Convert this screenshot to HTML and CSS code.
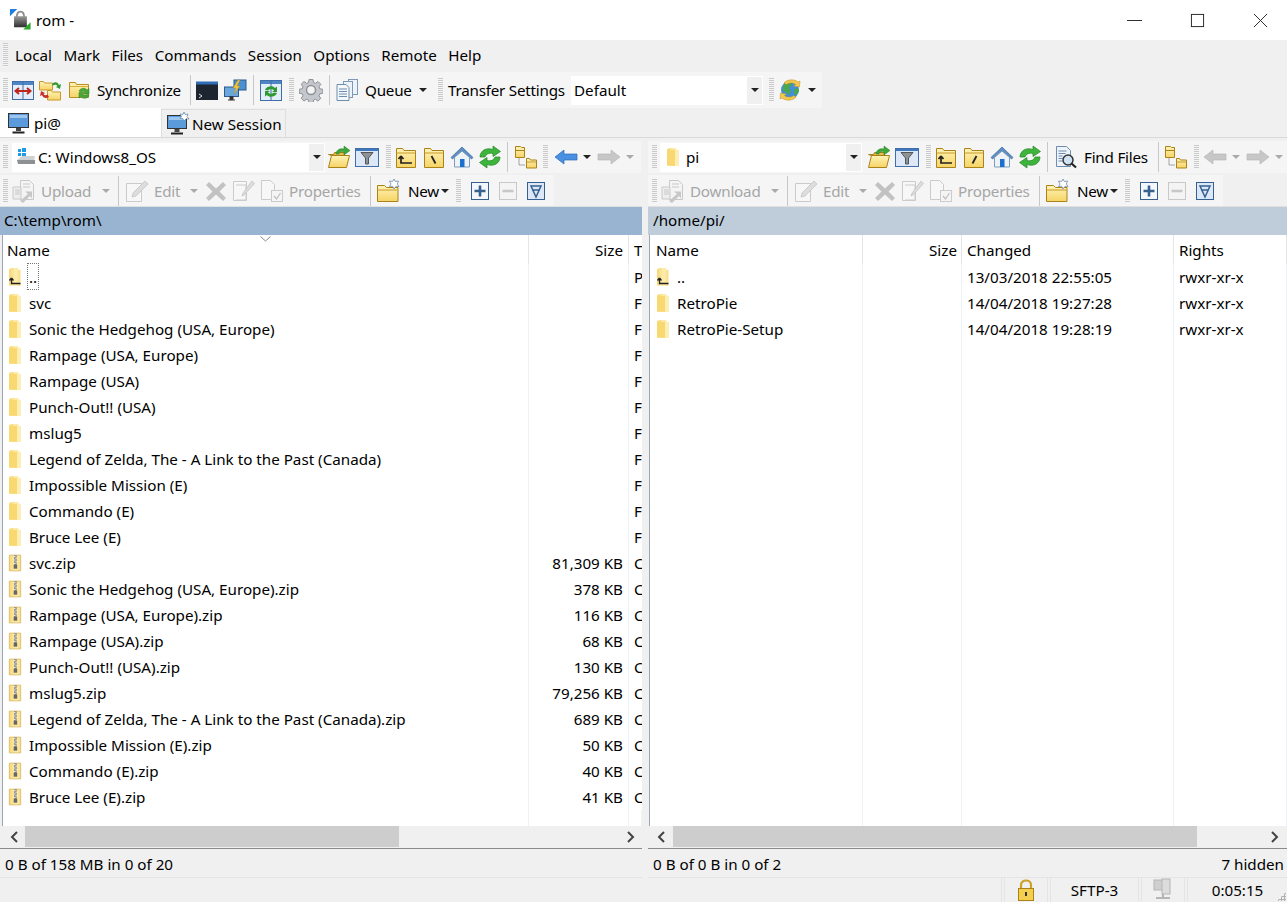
FILE: index.html
```html
<!DOCTYPE html>
<html lang="en">
<head>
<meta charset="utf-8">
<title>rom - WinSCP</title>
<link rel="stylesheet" href="styles.css">
</head>
<body>
<svg class="defs" width="0" height="0" aria-hidden="true">
<defs>
<linearGradient id="fy" x1="0" y1="0" x2="1" y2="0"><stop offset="0" stop-color="#f7d774"/><stop offset=".6" stop-color="#fdeeb0"/><stop offset="1" stop-color="#f9dc85"/></linearGradient>
<linearGradient id="fb" x1="0" y1="0" x2="0" y2="1"><stop offset="0" stop-color="#fff3b8"/><stop offset="1" stop-color="#f6d465"/></linearGradient>
<linearGradient id="lk" x1="0" y1="0" x2="0" y2="1"><stop offset="0" stop-color="#9a9a9a"/><stop offset="1" stop-color="#2e2e2e"/></linearGradient>
<symbol id="flat" viewBox="0 0 14 20"><path d="M1 2.5 3 1h7v1.5l2.5 .5v16L1 18.5z" fill="url(#fy)"/><path d="M1 2.5v16L9 19V3z" fill="#f9d872"/><path d="M9 3l3.5 0v16H9z" fill="#fdeeb4"/></symbol>
<symbol id="flatup" viewBox="0 0 14 20"><path d="M1 2.5 3 1h7v1.5l2.5 .5v16L1 18.5z" fill="url(#fy)"/><path d="M3.500 11v5.500h9M3.500 11l-2 2.500M3.500 11l2 2.500" fill="none" stroke="#222" stroke-width="1.300"/></symbol>
<symbol id="zip" viewBox="0 0 16 20"><path d="M1.500 1h13v18h-13z" fill="url(#fy)" stroke="#d9bd6a"/><path d="M7 1h3v12H7z" fill="#8d8d8d"/><path d="M7 2h1.500v1H7zm1.500 2H10v1H8.500zM7 6h1.500v1H7zm1.500 2H10v1H8.500zM7 10h1.500v1H7z" fill="#eee"/><rect x="6.500" y="12" width="4" height="4.500" fill="#666"/></symbol>
<symbol id="compare" viewBox="0 0 24 24"><rect x="1.500" y="3.500" width="21" height="18" fill="#e4eefa" stroke="#3f6ea8"/><rect x="2" y="4" width="20" height="3" fill="#4f86c6"/><path d="M12 4v17" stroke="#3f6ea8"/><path d="M5 13h14M8 10l-3.500 3L8 16M16 10l3.500 3-3.500 3" fill="none" stroke="#c0271f" stroke-width="2"/></symbol>
<symbol id="syncdirs" viewBox="0 0 24 24"><path d="M1.500 3.500h4l1 1.500h8v7h-13z" fill="url(#fb)" stroke="#c79a2a"/><path d="M9.500 12.500h4l1 1.500h8v8h-13z" fill="url(#fb)" stroke="#c79a2a"/><path d="M14 6c3-3 6-2 7 1l2-1-1 5-4-2 1.500-1c-1-1.500-3-1.500-4.500-.5z" fill="#2f9a2f"/><path d="M11 19c-3 2-6 1-7-2l-2 1 1-5 4 2-1.500 1c1 1.500 3 1.500 4 .5z" fill="#c9302a"/></symbol>
<symbol id="syncfold" viewBox="0 0 24 24"><path d="M1.500 4.500h6l1 2h12v13h-19z" fill="url(#fb)" stroke="#b98f22"/><path d="M2 8.500h18" stroke="#d9b040"/><path d="M11 13c2-3.500 6-3.500 8-1l2-1.500v5.500h-5.500l2-1.500c-1.500-1.500-3.500-1.500-4.500-.5z" fill="#45a83a" stroke="#2d7f25" stroke-width=".5"/><path d="M21 17.500c-2 3.500-6 3.500-8 1l-2 1.500v-5.500h5.500l-2 1.500c1.500 1.500 3.500 1.500 4.500.5z" fill="#45a83a" stroke="#2d7f25" stroke-width=".5"/></symbol>
<symbol id="term" viewBox="0 0 24 24"><rect x="1" y="4" width="22" height="18" fill="#1d2530"/><rect x="1" y="3.500" width="22" height="3" fill="#2f6db5"/><path d="M4 16l3 2-3 2" fill="none" stroke="#ddd"/></symbol>
<symbol id="putty" viewBox="0 0 24 24"><rect x="11" y="2" width="12" height="10" fill="#4a8fd0" stroke="#2b5a8c"/><rect x="1.500" y="9" width="14" height="9.500" fill="#6aa5dc" stroke="#2b5a8c"/><path d="M7 18.500h3v3H7zM5 22h7" stroke="#333" fill="#333"/><path d="M15 2l-5 8h3l-2 6 6-8h-3l3-6z" fill="#f3c63c" stroke="#b98f22" stroke-width=".5"/></symbol>
<symbol id="winsync" viewBox="0 0 24 24"><rect x="1.500" y="2.500" width="21" height="20" fill="#e4eefa" stroke="#3f6ea8"/><rect x="2" y="3" width="20" height="3" fill="#4f86c6"/><path d="M12 3v19" stroke="#3f6ea8"/><path d="M6 12c1-4 8-5 10-2l2-1.500V14h-5l2-1.500c-2-2-5-1-6 0z" fill="#2f9a2f"/><path d="M18 15c-1 4-8 5-10 2l-2 1.500V13h5l-2 1.500c2 2 5 1 6 0z" fill="#2f9a2f"/></symbol>
<symbol id="gear" viewBox="0 0 24 24"><path d="M10 1.500h4l.5 3 2 .8 2.500-1.800 2.800 2.800-1.800 2.500.8 2 3 .5v4l-3 .5-.8 2 1.800 2.500-2.800 2.800-2.500-1.800-2 .8-.5 3h-4l-.5-3-2-.8-2.500 1.800-2.800-2.800 1.800-2.500-.8-2-3-.5v-4l3-.5.8-2-1.800-2.500 2.800-2.800 2.500 1.800 2-.8z" fill="#c4c8cc" stroke="#8d9297"/><circle cx="12" cy="12" r="4.500" fill="#f3f3f3" stroke="#8d9297" stroke-width="1.500"/></symbol>
<symbol id="queue" viewBox="0 0 24 24"><rect x="13.500" y="1.500" width="9" height="15" fill="#eef3f9" stroke="#7d99b8"/><rect x="8.500" y="3.500" width="9" height="16" fill="#eef3f9" stroke="#7d99b8"/><path d="M2 6.500h9l3 3v13H2z" fill="#f4f7fb" stroke="#6e8cae"/><path d="M4 11h8M4 13.500h8M4 16h8M4 18.500h8" stroke="#6e8cae"/></symbol>
<symbol id="globe" viewBox="0 0 24 24"><circle cx="12" cy="12" r="9" fill="#3f8fdc"/><path d="M7 5l5-1 2 3-3 3 2 3-2 4-3-3-3-1V8zM16 11l4-1 1 3-3 5-2-3z" fill="#4aa650"/><path d="M6 5c3-4 11-4 14-1l2-1-.5 6-6-1 2-1.500c-2-2-7-2-9 0z" fill="#f2c94c" stroke="#b98f22" stroke-width=".5"/><path d="M18 19c-3 4-11 4-14 1l-2 1 .5-6 6 1-2 1.500c2 2 7 2 9 0z" fill="#f2c94c" stroke="#b98f22" stroke-width=".5"/></symbol>
<symbol id="monitor" viewBox="0 0 24 24"><rect x="1.500" y="2.500" width="20" height="14" fill="#5b9bdc" stroke="#333"/><path d="M3 4h17v3H3z" fill="#9cc6ee"/><path d="M9 17h5v3H9z" fill="#444"/><path d="M5.500 20.500h12v2h-12z" fill="#222"/></symbol>
<symbol id="monnew" viewBox="0 0 24 24"><rect x="1.500" y="3.500" width="19" height="13" fill="#5b9bdc" stroke="#333"/><path d="M3 5h14v3H3z" fill="#9cc6ee"/><path d="M8.500 17h5v3h-5z" fill="#444"/><path d="M5 20.500h12v2H5z" fill="#222"/><path d="M18 0l1.200 2.500L22 2l-1 2.500L23 7l-2.800-.2L18 9l-1.200-2.500L14 6.500 15.500 4.500 14 2l3 .5z" fill="#fff" stroke="#5f7ea5" stroke-width=".7"/></symbol>
<symbol id="disk" viewBox="0 0 20 20"><path d="M1 13l5-4h13l-1 5H1z" fill="#cfd2d4"/><path d="M1 13h18v4H2z" fill="#8d9193"/><path d="M2 2h3v3H2zM6 1h4v4H6zM2 6h3v3H2zM6 6h4v3H6z" fill="#1e9be8"/></symbol>
<symbol id="openf" viewBox="0 0 24 24"><path d="M1.500 9.500h5l1-2h10v3h-13z" fill="#e6bc4c" stroke="#a98318"/><path d="M1.500 22.500l3-12h18l-3 12z" fill="url(#fb)" stroke="#a98318"/><path d="M9 9c0-4 4-6 8-5V1l6 4.500-6 4.500V7c-3-1-5 0-5 2z" fill="#3da83a" stroke="#2a7d28" stroke-width=".5"/></symbol>
<symbol id="filter" viewBox="0 0 24 24"><rect x=".5" y="3.500" width="23" height="18" fill="#dce8f7" stroke="#3f6ea8"/><rect x="1" y="4" width="22" height="2" fill="#3f78bd"/><path d="M6 7.500h12l-4.500 5.500v6h-3v-6z" fill="#8d9297" stroke="#555"/></symbol>
<symbol id="fup" viewBox="0 0 24 24"><path d="M2.500 22.500v-19h6l1.500 2h11.500v17z" fill="url(#fb)" stroke="#a98318"/><path d="M2.500 8h19" stroke="#c79a2a"/><path d="M7 11v7h11M7 11l-2.500 3M7 11l2.500 3" fill="none" stroke="#222" stroke-width="1.700"/></symbol>
<symbol id="froot" viewBox="0 0 24 24"><path d="M2.500 22.500v-19h6l1.500 2h11.500v17z" fill="url(#fb)" stroke="#a98318"/><path d="M2.500 8h19" stroke="#c79a2a"/><path d="M9.500 11l4 7.500" stroke="#222" stroke-width="1.800"/></symbol>
<symbol id="froots" viewBox="0 0 24 24"><path d="M2.500 22.500v-19h6l1.500 2h11.500v17z" fill="url(#fb)" stroke="#a98318"/><path d="M2.500 8h19" stroke="#c79a2a"/><path d="M14.500 11l-4 7.500" stroke="#222" stroke-width="1.800"/></symbol>
<symbol id="home" viewBox="0 0 24 24"><path d="M12 2L1 12.500l1.500 1.500L12 5.500 21.500 14l1.500-1.500z" fill="#5c8fc4" stroke="#3d6a9c" stroke-width=".7"/><path d="M4.500 12.500L12 6l7.500 6.500V22h-15z" fill="#eef3f8" stroke="#7e9dbd"/><rect x="10" y="14" width="4.500" height="8" fill="#1a6fd1"/></symbol>
<symbol id="refresh" viewBox="0 0 24 24"><path d="M2 12C2 6 8 2 15 4.500V1l7.500 5.500-7.500 5V8.500C11 7.500 8 9 7 12z" fill="#3cb53a" stroke="#24852a" stroke-width=".7"/><path d="M22 12C22 18 16 22 9 19.500V23L1.500 17.500 9 12.500V15.500C13 16.500 16 15 17 12z" fill="#3cb53a" stroke="#24852a" stroke-width=".7"/></symbol>
<symbol id="tree" viewBox="0 0 24 24"><path d="M1.500 1.500h5l1 1h3v10h-9z" fill="url(#fb)" stroke="#a98318"/><path d="M1.500 5.500h9" stroke="#a98318"/><path d="M5 13.500V20h6" fill="none" stroke="#555" stroke-dasharray="1 1"/><path d="M12.500 13.500h3l1 1.500h6v8h-10z" fill="url(#fb)" stroke="#a98318"/><path d="M12.500 17h10" stroke="#c79a2a"/></symbol>
<symbol id="back" viewBox="0 0 24 24"><path d="M1 12l9-7v4h13v6H10v4z" fill="#4a90e2" stroke="#2e6cb5" stroke-width=".7"/></symbol>
<symbol id="fwd" viewBox="0 0 24 24"><path d="M23 12l-9-7v4H1v6h13v4z" fill="#4a90e2" stroke="#2e6cb5" stroke-width=".7"/></symbol>
<symbol id="upload" viewBox="0 0 24 24"><path d="M9.500 1.500h9l4 4v15h-13z" fill="#f1f3f6" stroke="#88a"/><path d="M2 8h8v12H2z" fill="#dfe4ea" stroke="#88a"/><path d="M4 11h5M4 13h5M4 15h5M12 5h7M12 8h7" stroke="#88a"/><path d="M9 22l8-7-3-2.500h7v7l-2-2.500-7 7z" fill="#7a8c7a"/></symbol>
<symbol id="edit" viewBox="0 0 24 24"><path d="M1.500 4.500h15v18h-15z" fill="#fafafa" stroke="#8d9297"/><path d="M7 18l1-4L20 2l3 3L11 17z" fill="#b6bcc2" stroke="#70767b" stroke-width=".7"/></symbol>
<symbol id="del" viewBox="0 0 24 24"><path d="M5 3l7 6.500L19 3l3 3-6.500 6.500L22 19l-3 3-7-6.500L5 22l-3-3 6.500-6.500L2 6z" fill="#7b7b7b"/></symbol>
<symbol id="editp" viewBox="0 0 24 24"><path d="M1.500 2.500h13v19h-13z" fill="#fafafa" stroke="#8d9297"/><path d="M4 6h10v15H4" fill="#fafafa" stroke="#8d9297"/><path d="M10 17l1-3L20 2l2.500 2.500L12 16z" fill="#b6bcc2" stroke="#70767b" stroke-width=".7"/></symbol>
<symbol id="props" viewBox="0 0 24 24"><path d="M1.500 1.500h9l4 4v15h-13z" fill="#fafafa" stroke="#8d9297"/><rect x="11.500" y="11.500" width="11" height="11" fill="#f5f5f5" stroke="#8d9297"/><path d="M14 17l2.500 3 4-6" fill="none" stroke="#777" stroke-width="1.300"/></symbol>
<symbol id="newf" viewBox="0 0 24 24"><path d="M1.500 6.500h7l2 2h11.500v14h-20.500z" fill="url(#fb)" stroke="#a98318"/><path d="M1.500 11h20" stroke="#c79a2a"/><path d="M18 0l1.200 2.500L22.500 2l-1.200 3 1.700 2.500-3-.2L18 10l-1.300-2.700-3.200.2L15 5l-1.500-3 3 .5z" fill="#fff" stroke="#5f7ea5" stroke-width=".7"/></symbol>
<symbol id="plus" viewBox="0 0 18 18"><rect x=".5" y=".5" width="17" height="17" fill="#f4f7fb" stroke="#35608f"/><path d="M3.500 9h11M9 3.500v11" stroke="#35608f" stroke-width="2.600"/></symbol>
<symbol id="minus" viewBox="0 0 18 18"><rect x=".5" y=".5" width="17" height="17" fill="#f4f4f4" stroke="#c8c8c8"/><path d="M3.500 9h11" stroke="#c8c8c8" stroke-width="2.600"/></symbol>
<symbol id="invert" viewBox="0 0 18 18"><rect x=".5" y=".5" width="17" height="17" fill="#dce8f7" stroke="#35608f"/><path d="M4 4h10L9 15zM5 8h8" fill="none" stroke="#35608f" stroke-width="1.500"/></symbol>
<symbol id="find" viewBox="0 0 24 24"><path d="M2.500 1.500h10l4 4v16h-14z" fill="#eef3f9" stroke="#6e8cae"/><path d="M4.500 6h8M4.500 8.500h7M4.500 11h4M4.500 13.500h4M4.500 16h4" stroke="#6e8cae"/><circle cx="14" cy="15" r="5" fill="#cfe3f5" stroke="#333" stroke-width="1.500"/><path d="M17.500 18.500l4.500 4" stroke="#222" stroke-width="2.200"/></symbol>
<symbol id="app" viewBox="0 0 24 24"><path d="M1 1h8L1 9z" fill="#1e7fe0"/><path d="M8.500 10c0-8 8-8 8 0" fill="none" stroke="#8a8a8a" stroke-width="2"/><rect x="5.500" y="9" width="14" height="12" fill="url(#lk)"/><path d="M23.500 23.500h-8l8-8z" fill="#29a829"/></symbol>
<symbol id="lock" viewBox="0 0 20 24"><path d="M5 11V7c0-6 10-6 10 0v4" fill="none" stroke="#c9a227" stroke-width="2.200"/><rect x="2.500" y="10.500" width="15" height="12" fill="#f4cf4f" stroke="#a98318"/><rect x="9" y="14" width="2" height="4" fill="#333"/></symbol>
<symbol id="net" viewBox="0 0 20 24"><rect x="1" y="2" width="11" height="10" fill="#cfcfcf" stroke="#b5b5b5"/><rect x="9" y="1" width="8" height="15" fill="#dcdcdc" stroke="#b5b5b5"/><path d="M10 16v4M3 20h14" stroke="#b5b5b5" stroke-width="2"/></symbol>
</defs>
</svg>

<div class="window">
  <header class="titlebar">
    <svg class="ico ico-app"><use href="#app"/></svg>
    <span class="title">rom -</span>
    <div class="winctl">
      <svg class="wc" viewBox="0 0 16 16"><path d="M0 8h16" stroke="#222"/></svg>
      <svg class="wc" viewBox="0 0 16 16"><rect x="1.500" y="1.500" width="13" height="13" fill="none" stroke="#222"/></svg>
      <svg class="wc" viewBox="0 0 16 16"><path d="M1 1l14 14M15 1L1 15" stroke="#222"/></svg>
    </div>
  </header>

  <nav class="menubar">
    <i class="grip"></i>
    <span>Local</span><span>Mark</span><span>Files</span><span>Commands</span><span>Session</span><span>Options</span><span>Remote</span><span>Help</span>
  </nav>

  <div class="maintools">
    <i class="grip"></i>
    <span class="ib w-c"><svg class="ico"><use href="#compare"/></svg></span>
    <span class="ib m-1"><svg class="ico"><use href="#syncdirs"/></svg></span>
    <span class="ib m-2"><svg class="ico"><use href="#syncfold"/></svg></span>
    <span class="lbl l-sync">Synchronize</span>
    <i class="sep s-9"></i>
    <span class="ib m-2"><svg class="ico"><use href="#term"/></svg></span>
    <span class="ib"><svg class="ico"><use href="#putty"/></svg></span>
    <i class="sep s-4"></i>
    <span class="ib m-3"><svg class="ico"><use href="#winsync"/></svg></span>
    <i class="grip g-4"></i>
    <span class="ib m-3"><svg class="ico"><use href="#gear"/></svg></span>
    <i class="sep s-4"></i>
    <span class="ib m-3"><svg class="ico"><use href="#queue"/></svg></span>
    <span class="lbl l-queue">Queue</span>
    <i class="caret c-queue"></i>
    <i class="grip g-b"></i>
    <span class="lbl l-ts">Transfer Settings</span>
    <div class="combo c-ts"><span>Default</span><b class="drop"><i class="caret"></i></b></div>
    <i class="grip g-c"></i>
    <span class="ib m-2"><svg class="ico"><use href="#globe"/></svg></span>
    <i class="caret c-globe"></i>
  </div>

  <div class="tabs">
    <div class="tab active"><svg class="ico"><use href="#monitor"/></svg><span>pi@</span></div>
    <div class="tab"><svg class="ico"><use href="#monnew"/></svg><span>New Session</span></div>
  </div>

  <main class="panes">
    <section class="pane pane-l">
      <div class="tb tb1">
        <i class="grip"></i>
        <div class="combo c-local"><svg class="ico-d"><use href="#disk"/></svg><span>C: Windows8_OS</span><b class="drop"><i class="caret"></i></b></div>
        <span class="ib"><svg class="ico"><use href="#openf"/></svg></span>
        <span class="ib"><svg class="ico"><use href="#filter"/></svg></span>
        <i class="grip g-5"></i>
        <span class="ib m-1"><svg class="ico"><use href="#fup"/></svg></span>
        <span class="ib"><svg class="ico"><use href="#froot"/></svg></span>
        <span class="ib"><svg class="ico"><use href="#home"/></svg></span>
        <span class="ib"><svg class="ico"><use href="#refresh"/></svg></span>
        <i class="sep s-3"></i>
        <span class="ib m-4"><svg class="ico"><use href="#tree"/></svg></span>
        <i class="grip g-3"></i>
        <span class="ib m-4"><svg class="ico"><use href="#back"/></svg></span>
        <i class="caret cbox"></i>
        <span class="ib off m-1"><svg class="ico"><use href="#fwd"/></svg></span>
        <i class="caret cbox dis"></i>
      </div>
      <div class="tb tb2">
        <i class="grip"></i>
        <span class="ib off m-1"><svg class="ico"><use href="#upload"/></svg></span>
        <span class="lbl dis t-upload">Upload</span>
        <i class="caret cbox dis"></i>
        <i class="sep s-5"></i>
        <span class="ib off m-4"><svg class="ico"><use href="#edit"/></svg></span>
        <span class="lbl dis t-edit">Edit</span>
        <i class="caret cbox dis"></i>
        <span class="ib off m-1"><svg class="ico"><use href="#del"/></svg></span>
        <span class="ib off"><svg class="ico"><use href="#editp"/></svg></span>
        <span class="ib off"><svg class="ico"><use href="#props"/></svg></span>
        <span class="lbl dis t-props">Properties</span>
        <i class="sep s-9"></i>
        <span class="ib m-3"><svg class="ico"><use href="#newf"/></svg></span>
        <span class="lbl t-new">New</span>
        <i class="caret c-new"></i>
        <i class="grip g-7"></i>
        <span class="ib m-5"><svg class="ico-s"><use href="#plus"/></svg></span>
        <span class="ib"><svg class="ico-s"><use href="#minus"/></svg></span>
        <span class="ib"><svg class="ico-s"><use href="#invert"/></svg></span>
      </div>
      <div class="path active-path">C:\temp\rom\</div>
      <div class="list">
        <div class="row head cols-l"><span class="c n">Name<svg class="sort" viewBox="0 0 11 6"><path d="M.5 .5 5.500 5 10.500 .5" fill="none" stroke="#888"/></svg></span><span class="c r">Size</span><span class="c t">T</span></div>
        <div class="row cols-l"><span class="c n"><svg class="fi"><use href="#flatup"/></svg><span class="focus">..</span></span><span class="c r"></span><span class="c t">P</span></div>
        <div class="row cols-l"><span class="c n"><svg class="fi"><use href="#flat"/></svg>svc</span><span class="c r"></span><span class="c t">F</span></div>
        <div class="row cols-l"><span class="c n"><svg class="fi"><use href="#flat"/></svg>Sonic the Hedgehog (USA, Europe)</span><span class="c r"></span><span class="c t">F</span></div>
        <div class="row cols-l"><span class="c n"><svg class="fi"><use href="#flat"/></svg>Rampage (USA, Europe)</span><span class="c r"></span><span class="c t">F</span></div>
        <div class="row cols-l"><span class="c n"><svg class="fi"><use href="#flat"/></svg>Rampage (USA)</span><span class="c r"></span><span class="c t">F</span></div>
        <div class="row cols-l"><span class="c n"><svg class="fi"><use href="#flat"/></svg>Punch-Out!! (USA)</span><span class="c r"></span><span class="c t">F</span></div>
        <div class="row cols-l"><span class="c n"><svg class="fi"><use href="#flat"/></svg>mslug5</span><span class="c r"></span><span class="c t">F</span></div>
        <div class="row cols-l"><span class="c n"><svg class="fi"><use href="#flat"/></svg>Legend of Zelda, The - A Link to the Past (Canada)</span><span class="c r"></span><span class="c t">F</span></div>
        <div class="row cols-l"><span class="c n"><svg class="fi"><use href="#flat"/></svg>Impossible Mission (E)</span><span class="c r"></span><span class="c t">F</span></div>
        <div class="row cols-l"><span class="c n"><svg class="fi"><use href="#flat"/></svg>Commando (E)</span><span class="c r"></span><span class="c t">F</span></div>
        <div class="row cols-l"><span class="c n"><svg class="fi"><use href="#flat"/></svg>Bruce Lee (E)</span><span class="c r"></span><span class="c t">F</span></div>
        <div class="row cols-l"><span class="c n"><svg class="fi"><use href="#zip"/></svg>svc.zip</span><span class="c r">81,309 KB</span><span class="c t">C</span></div>
        <div class="row cols-l"><span class="c n"><svg class="fi"><use href="#zip"/></svg>Sonic the Hedgehog (USA, Europe).zip</span><span class="c r">378 KB</span><span class="c t">C</span></div>
        <div class="row cols-l"><span class="c n"><svg class="fi"><use href="#zip"/></svg>Rampage (USA, Europe).zip</span><span class="c r">116 KB</span><span class="c t">C</span></div>
        <div class="row cols-l"><span class="c n"><svg class="fi"><use href="#zip"/></svg>Rampage (USA).zip</span><span class="c r">68 KB</span><span class="c t">C</span></div>
        <div class="row cols-l"><span class="c n"><svg class="fi"><use href="#zip"/></svg>Punch-Out!! (USA).zip</span><span class="c r">130 KB</span><span class="c t">C</span></div>
        <div class="row cols-l"><span class="c n"><svg class="fi"><use href="#zip"/></svg>mslug5.zip</span><span class="c r">79,256 KB</span><span class="c t">C</span></div>
        <div class="row cols-l"><span class="c n"><svg class="fi"><use href="#zip"/></svg>Legend of Zelda, The - A Link to the Past (Canada).zip</span><span class="c r">689 KB</span><span class="c t">C</span></div>
        <div class="row cols-l"><span class="c n"><svg class="fi"><use href="#zip"/></svg>Impossible Mission (E).zip</span><span class="c r">50 KB</span><span class="c t">C</span></div>
        <div class="row cols-l"><span class="c n"><svg class="fi"><use href="#zip"/></svg>Commando (E).zip</span><span class="c r">40 KB</span><span class="c t">C</span></div>
        <div class="row cols-l"><span class="c n"><svg class="fi"><use href="#zip"/></svg>Bruce Lee (E).zip</span><span class="c r">41 KB</span><span class="c t">C</span></div>
        <div class="row fill cols-l"><span class="c"></span><span class="c"></span><span class="c"></span></div>
      </div>
      <div class="hscroll">
        <span class="sb"><svg viewBox="0 0 10 14"><path d="M8 2 3 7l5 5" fill="none" stroke="#444" stroke-width="2"/></svg></span>
        <span class="track"><b class="thumb thumb-l"></b></span>
        <span class="sb"><svg viewBox="0 0 10 14"><path d="M2 2l5 5-5 5" fill="none" stroke="#444" stroke-width="2"/></svg></span>
      </div>
      <div class="pstatus">0 B of 158 MB in 0 of 20</div>
    </section>

    <section class="pane pane-r">
      <div class="tb tb1 tbr">
        <i class="grip"></i>
        <div class="combo c-remote"><svg class="fi"><use href="#flat"/></svg><span>pi</span><b class="drop"><i class="caret"></i></b></div>
        <span class="ib m-3"><svg class="ico"><use href="#openf"/></svg></span>
        <span class="ib"><svg class="ico"><use href="#filter"/></svg></span>
        <i class="grip g-5"></i>
        <span class="ib m-1"><svg class="ico"><use href="#fup"/></svg></span>
        <span class="ib"><svg class="ico"><use href="#froots"/></svg></span>
        <span class="ib"><svg class="ico"><use href="#home"/></svg></span>
        <span class="ib"><svg class="ico"><use href="#refresh"/></svg></span>
        <i class="sep s-3"></i>
        <span class="ib m-4"><svg class="ico"><use href="#find"/></svg></span>
        <span class="lbl t-find">Find Files</span>
        <i class="sep s-9"></i>
        <span class="ib m-3"><svg class="ico"><use href="#tree"/></svg></span>
        <i class="grip g-4"></i>
        <span class="ib off m-2"><svg class="ico"><use href="#back"/></svg></span>
        <i class="caret cbox dis"></i>
        <span class="ib off m-1"><svg class="ico"><use href="#fwd"/></svg></span>
        <i class="caret cbox dis"></i>
      </div>
      <div class="tb tb2 tbr">
        <i class="grip"></i>
        <span class="ib off m-1"><svg class="ico"><use href="#upload"/></svg></span>
        <span class="lbl dis t-dl">Download</span>
        <i class="caret cbox dis"></i>
        <i class="sep s-5"></i>
        <span class="ib off m-4"><svg class="ico"><use href="#edit"/></svg></span>
        <span class="lbl dis t-edit">Edit</span>
        <i class="caret cbox dis"></i>
        <span class="ib off m-1"><svg class="ico"><use href="#del"/></svg></span>
        <span class="ib off"><svg class="ico"><use href="#editp"/></svg></span>
        <span class="ib off"><svg class="ico"><use href="#props"/></svg></span>
        <span class="lbl dis t-props">Properties</span>
        <i class="sep s-9"></i>
        <span class="ib m-3"><svg class="ico"><use href="#newf"/></svg></span>
        <span class="lbl t-new">New</span>
        <i class="caret c-new"></i>
        <i class="grip g-7"></i>
        <span class="ib m-5"><svg class="ico-s"><use href="#plus"/></svg></span>
        <span class="ib"><svg class="ico-s"><use href="#minus"/></svg></span>
        <span class="ib"><svg class="ico-s"><use href="#invert"/></svg></span>
      </div>
      <div class="path idle-path">/home/pi/</div>
      <div class="list">
        <div class="row head cols-r"><span class="c n">Name</span><span class="c r">Size</span><span class="c d">Changed</span><span class="c d">Rights</span></div>
        <div class="row cols-r"><span class="c n"><svg class="fi"><use href="#flatup"/></svg>..</span><span class="c r"></span><span class="c d">13/03/2018 22:55:05</span><span class="c d">rwxr-xr-x</span></div>
        <div class="row cols-r"><span class="c n"><svg class="fi"><use href="#flat"/></svg>RetroPie</span><span class="c r"></span><span class="c d">14/04/2018 19:27:28</span><span class="c d">rwxr-xr-x</span></div>
        <div class="row cols-r"><span class="c n"><svg class="fi"><use href="#flat"/></svg>RetroPie-Setup</span><span class="c r"></span><span class="c d">14/04/2018 19:28:19</span><span class="c d">rwxr-xr-x</span></div>
        <div class="row fill cols-r"><span class="c"></span><span class="c"></span><span class="c"></span><span class="c"></span></div>
      </div>
      <div class="hscroll">
        <span class="sb"><svg viewBox="0 0 10 14"><path d="M8 2 3 7l5 5" fill="none" stroke="#444" stroke-width="2"/></svg></span>
        <span class="track"><b class="thumb thumb-r"></b></span>
        <span class="sb"><svg viewBox="0 0 10 14"><path d="M2 2l5 5-5 5" fill="none" stroke="#444" stroke-width="2"/></svg></span>
      </div>
      <div class="pstatus"><span>0 B of 0 B in 0 of 2</span><span>7 hidden</span></div>
    </section>
  </main>

  <footer class="statusbar">
    <div class="cell grow"></div>
    <div class="cell c-lock"><svg class="st-i"><use href="#lock"/></svg></div>
    <div class="cell c-proto">SFTP-3</div>
    <div class="cell c-net"><svg class="st-i"><use href="#net"/></svg></div>
    <div class="cell c-time">0:05:15</div>
    <i class="sizegrip"></i>
  </footer>
</div>
</body>
</html>
```
FILE: styles.css
```css
* { box-sizing: border-box; }
html, body { margin: 0; height: 100%; }
body { font: 15.2px/20px "Noto Sans", "Open Sans", sans-serif; color: #000; background: #f0f0f0; overflow: hidden; }
.defs { position: absolute; }
i, b { display: block; font-style: normal; flex: none; }
svg { display: block; flex: none; }
.window { display: flex; flex-direction: column; height: 902px; }

.titlebar { height: 40px; background: #fff; display: flex; align-items: center; padding-left: 9px; flex: none; }
.ico { width: 24px; height: 24px; }
.ico-app { width: 22px; height: 22px; margin-top: -3px; }
.title { margin-left: 5px; }
.winctl { margin-left: auto; display: flex; gap: 48px; padding-right: 19px; }
.wc { width: 15px; height: 15px; }

.grip { width: 5px; height: 24px; background: repeating-linear-gradient(#c9c9c9 0 1px, #f5f5f5 1px 2px); }

.menubar { height: 32px; display: flex; align-items: center; padding: 0 0 2px 3px; flex: none; }
.menubar span { margin-left: 11.500px; }
.menubar span:first-of-type { margin-left: 7px; }

.maintools { height: 36px; width: fit-content; display: flex; align-items: center; padding: 0 6px 0 3px; flex: none; background: #f5f5f5; }
.ib { width: 28px; height: 28px; display: flex; align-items: center; justify-content: center; flex: none; }
.sep { width: 1px; height: 30px; background: #c8c8c8; flex: none; }
.caret { width: 0; height: 0; border: 4px solid transparent; border-top-color: #222; border-bottom: 0; }
.caret.dis { border-top-color: #aaa; }
.cbox { margin: 0 3px; }
.w-c { margin-left: 3px; width: 24px; }
.lbl { white-space: nowrap; flex: none; letter-spacing: -.22px; }
.dis { color: #a6a6a6; }
.off svg { filter: grayscale(1) opacity(.42); }
.l-sync { width: 84px; margin-left: 3px; }
.l-queue { margin-left: 4px; width: 46px; }
.c-queue { margin-left: 8px; }
.g-b { margin-left: 11px; }
.l-ts { margin-left: 5px; width: 116px; }
.combo { height: 29px; background: #fff; display: flex; align-items: center; flex: none; }
.c-ts { width: 192px; margin-left: 7px; padding-left: 3px; }
.drop { margin-left: auto; width: 17px; height: 100%; background: #f0f0f0; border: 1px solid #fff; display: flex; align-items: center; justify-content: center; }
.g-c { margin-left: 6px; }
.c-globe { margin-left: 4px; }

.tabs { height: 30px; display: flex; align-items: stretch; border-bottom: 1px solid #d9d9d9; flex: none; }
.tab { display: flex; align-items: center; padding-left: 4px; gap: 2px; border: 1px solid #dedede; border-bottom: 0; margin-top: 1px; width: 125px; }
.tab.active { background: #fff; width: 161px; border: 0; margin-top: 0; padding-left: 7px; gap: 3px; }

.panes { flex: 1; display: flex; min-height: 0; }
.pane { display: flex; flex-direction: column; min-width: 0; padding-top: 3px; }
.pane-l { width: 642px; flex: none; }
.pane-r { flex: 1; margin-left: 6px; }

.tb { height: 32px; width: fit-content; display: flex; align-items: center; padding: 0 4px 0 3px; flex: none; background: #f5f5f5; }
.tb2 { margin-top: 2px; height: 31px; }
.tbr { padding-left: 4px; }
.c-local { width: 313px; margin-left: 4px; padding-left: 4px; gap: 2px; }
.ico-d { width: 20px; height: 20px; }
.c-remote { width: 202px; margin-left: 3px; padding-left: 6px; }
.c-remote .fi { margin-right: 6px; }
.ico-s { width: 18px; height: 18px; }
.g-5 { margin-left: 5px; }
.m-1 { margin-left: 1px; }
.m-2 { margin-left: 2px; }
.m-3 { margin-left: 3px; }
.m-4 { margin-left: 4px; }
.m-5 { margin-left: 5px; }
.g-3 { margin-left: 3px; }
.g-4 { margin-left: 4px; }
.g-7 { margin-left: 7px; }
.s-3 { margin-left: 3px; }
.s-4 { margin-left: 4px; }
.s-5 { margin-left: 5px; }
.s-9 { margin-left: 9px; }
.t-upload { margin-left: 4px; margin-right: 6px; width: 52px; }
.t-dl { margin-left: 4px; margin-right: 6px; width: 72px; }
.t-edit { margin-left: 3px; margin-right: 6px; width: 27px; }
.t-props { margin-left: 3px; width: 72px; }
.t-new { margin-left: 6px; width: 30px; }
.c-new { margin-left: 3px; }
.t-find { margin-left: 4px; width: 65px; }

.path { height: 29px; padding: 0 0 2px 4px; line-height: 27px; flex: none; border-top: 1px solid #e0e0e0; }
.active-path { background: #99b4d1; }
.idle-path { background: #bfcddb; padding-left: 5px; }

.list { flex: 1; min-height: 0; display: flex; flex-direction: column; background: #fff; border-left: 1px solid #9aa5b5; }
.pane-l .list { margin-left: 2px; }
.pane-r .list { margin-left: 1px; }
.row { height: 26px; display: grid; flex: none; align-items: stretch; white-space: nowrap; }
.cols-l { grid-template-columns: 526px 100px 13px; }
.cols-r { grid-template-columns: 213px 99px 212px 1fr; }
.head { height: 29px; }
.fill { flex: 1; }
.c { border-right: 1px solid #edf2f9; overflow: hidden; display: flex; align-items: center; padding: 0 5px 1px; }
.head .c { border-right-color: #e5e5e5; padding-bottom: 0; }
.c.n { position: relative; overflow: visible; }
.pane-r .c.n { padding-left: 6px; }
.r { justify-content: flex-end; }
.cols-r .r { padding-right: 4px; }
.t { border-right: 0; }
.fi { width: 14px; height: 20px; margin-right: 7px; }
.head .n { padding-left: 4px; }
.sort { position: absolute; left: 257px; top: 1px; width: 11px; height: 6px; }
.focus { outline: 1px dotted #777; padding: 0 1px; display: block; height: 25px; line-height: 26px; margin-left: -1px; }

.hscroll { height: 23px; display: flex; background: #f0f0f0; flex: none; border-bottom: 1px solid #8a8a8a; padding-bottom: 1px; }
.pane-l .hscroll { padding-left: 2px; }
.sb { width: 23px; display: flex; align-items: center; justify-content: center; flex: none; }
.pane-r .sb { width: 25px; }
.sb svg { width: 10px; height: 14px; }
.track { flex: 1; }
.thumb { height: 100%; background: #cdcdcd; }
.thumb-l { width: 374px; }
.thumb-r { width: 524px; }

.pstatus { height: 29px; display: flex; justify-content: space-between; align-items: center; padding: 2px 3px 0 5px; flex: none; border-bottom: 1px solid #e4e4e4; }
.statusbar { height: 24px; display: flex; gap: 2px; flex: none; position: relative; }
.cell { border: 1px solid #e4e4e4; border-width: 0 1px; display: flex; align-items: center; justify-content: center; }
.grow { flex: 1; border-left: 0; }
.c-lock { width: 44px; }
.c-proto { width: 89px; }
.c-net { width: 44px; }
.c-time { width: 100px; border-right: 0; }
.st-i { width: 20px; height: 24px; }
.sizegrip { position: absolute; right: 1px; bottom: 1px; width: 9px; height: 9px; background: radial-gradient(circle, #b0b0b0 1px, transparent 1.200px) 0 0 / 3px 3px; clip-path: polygon(100% 0, 100% 100%, 0 100%); }
```
